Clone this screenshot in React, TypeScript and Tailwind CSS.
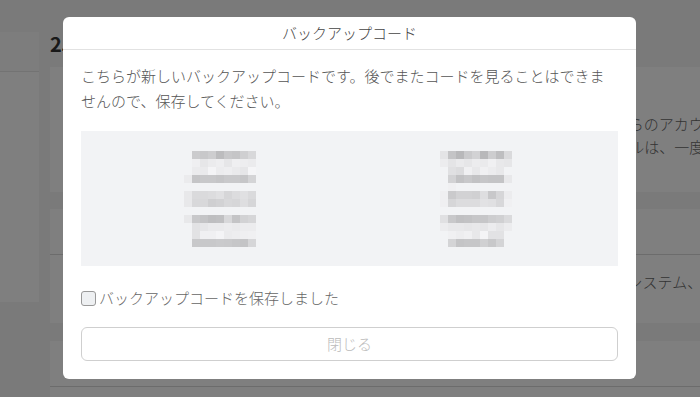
import React from 'react'

// pixelated (blurred) backup codes, gray level per 8px cell, 0 = box background
const leftCodes: number[][] = [
  [0, 0xcb, 0xc8, 0xcd, 0xbc, 0xc8, 0xc5, 0xcf, 0xd8],
  [0, 0xef, 0xe6, 0xeb, 0xee, 0xe6, 0xef, 0xed, 0xeb],
  [0, 0xeb, 0xea, 0xf4, 0xec, 0xee, 0xea, 0xe6, 0xf5],
  [0xeb, 0xc5, 0xc8, 0xc8, 0xc5, 0xc9, 0xc9, 0xc6, 0xd4],
  [0, 0, 0, 0, 0, 0, 0, 0, 0],
  [0xe8, 0xda, 0xda, 0xdc, 0xe0, 0xd6, 0xdc, 0xe0, 0xda],
  [0xe8, 0xd8, 0xd8, 0xcf, 0xd2, 0xd8, 0xd6, 0xde, 0xd6],
  [0, 0, 0, 0, 0, 0, 0, 0, 0],
  [0xe8, 0xc8, 0xc4, 0xbe, 0xc0, 0xd8, 0xc4, 0xd2, 0xd6],
  [0, 0xe2, 0xe6, 0xea, 0xea, 0xec, 0xea, 0xec, 0xec],
  [0, 0xe2, 0xf0, 0xf0, 0xf4, 0xeb, 0xed, 0xef, 0xf0],
  [0, 0xc8, 0xc8, 0xc8, 0xca, 0xc9, 0xc6, 0xc4, 0xd6],
]

const rightCodes: number[][] = [
  [0xe4, 0xc4, 0xb8, 0xca, 0xd2, 0xb8, 0xcd, 0xbe, 0xda],
  [0xec, 0xe4, 0xea, 0xe6, 0xec, 0xea, 0xf0, 0xe8, 0xe6],
  [0, 0xe0, 0xdc, 0xf0, 0xe8, 0xf0, 0xec, 0xe8, 0],
  [0, 0xd2, 0xc2, 0xc8, 0xc2, 0xc6, 0xc4, 0xc4, 0xe8],
  [0, 0xf0, 0, 0, 0, 0, 0, 0, 0],
  [0xef, 0xca, 0xd2, 0xd2, 0xd0, 0xde, 0xc8, 0xd6, 0xec],
  [0xef, 0xd6, 0xdc, 0xdc, 0xdc, 0xe2, 0xe0, 0xd8, 0xf0],
  [0, 0, 0, 0, 0, 0, 0, 0, 0],
  [0xe0, 0xc8, 0xc0, 0xc2, 0xc6, 0xc6, 0xcd, 0xd0, 0xda],
  [0xec, 0xe8, 0xe8, 0xe6, 0xe8, 0xe6, 0xec, 0xe6, 0xec],
  [0, 0xf0, 0xed, 0xf0, 0xe8, 0xf4, 0xe2, 0xe2, 0],
  [0, 0xd4, 0xc4, 0xc6, 0xc6, 0xd0, 0xc8, 0xd4, 0],
]

function Mosaic({ cells }: { cells: number[][] }) {
  return (
    <div className="grid grid-cols-[repeat(9,8px)]">
      {cells.flat().map((v, i) => (
        <div
          key={i}
          className="h-2 w-2"
          style={{ backgroundColor: v ? `rgb(${v},${v},${v + 2})` : 'transparent' }}
        />
      ))}
    </div>
  )
}

function Page() {
  return (
    <div className="flex h-full bg-[#f4f4f4]">
      <aside className="mt-[32px] h-[270px] w-[39px] shrink-0 bg-white">
        <div className="h-[40px] border-b border-[#e6e6e6] bg-[#fafafa]" />
      </aside>
      <main className="ml-[11px] flex min-w-0 flex-1 flex-col">
        <h1 className="mt-[30px] h-[27px] whitespace-nowrap text-[20px] font-bold leading-[27px] text-[#333]">
          2段階認証
        </h1>
        <section className="mt-[10px] h-[125px] bg-white pl-[25px] pt-[45px] text-[15px] font-light leading-[23px] text-[#666]">
          <p className="whitespace-nowrap">
            二段階認証を有効にすると、ログイン時にパスワードに加えて端末の認証アプリからのアカウント確認が必要になります。
          </p>
          <p className="whitespace-nowrap">
            認証アプリを利用できない場合に備えてバックアップコードまたは登録済みのメールは、一度だけ使えます。
          </p>
        </section>
        <section className="mt-[17px] h-[114px] bg-white text-[15px] font-light leading-[23px] text-[#666]">
          <div className="h-[46px] border-b border-[#d8d8d8]" />
          <p className="whitespace-nowrap pl-[25px] pt-[15px]">
            セキュリティキーを登録すると、対応するブラウザやパソコンのオペレーティングシステム、またはハードウェアキーで認証できます。
          </p>
        </section>
        <section className="mt-[18px] flex-1 bg-white">
          <div className="h-[46px] border-b border-[#d8d8d8]" />
        </section>
      </main>
    </div>
  )
}

export default function App() {
  return (
    <div
      className="relative h-[397px] w-[700px] overflow-hidden"
      style={{ fontFamily: '"Noto Sans CJK JP", "Noto Sans", sans-serif' }}
    >
      <Page />
      <div className="absolute inset-0 bg-black/50" />

      <div className="absolute left-[63px] top-[17px] w-[573px] rounded-[6px] bg-white pb-[18px] font-light">
        <div className="h-[33px] border-b border-[#e2e2e2] text-center text-[15px] leading-[31px] text-[#444]">
          バックアップコード
        </div>
        <div className="px-[18px] pt-[13px]">
          <p className="text-[15px] leading-[25px] text-[#555]">
            こちらが新しいバックアップコードです。後でまたコードを見ることはできませんので、保存してください。
          </p>
          <div className="mt-[18px] flex h-[135px] items-center gap-[184px] bg-[#f2f3f5] pl-[103px]">
            <Mosaic cells={leftCodes} />
            <Mosaic cells={rightCodes} />
          </div>
          <label className="mt-[20px] flex h-[25px] items-center gap-[3px] text-[15px] text-[#666]">
            <span className="h-[15px] w-[15px] shrink-0 rounded-[3px] border border-[#999] bg-[#eef0f2]" />
            <span>バックアップコードを保存しました</span>
          </label>
          <button className="mt-[16px] flex h-[34px] w-full items-center justify-center rounded-[6px] border border-[#cfcfcf] bg-white text-[15px] font-light text-[#bbb]">
            閉じる
          </button>
        </div>
      </div>
    </div>
  )
}
